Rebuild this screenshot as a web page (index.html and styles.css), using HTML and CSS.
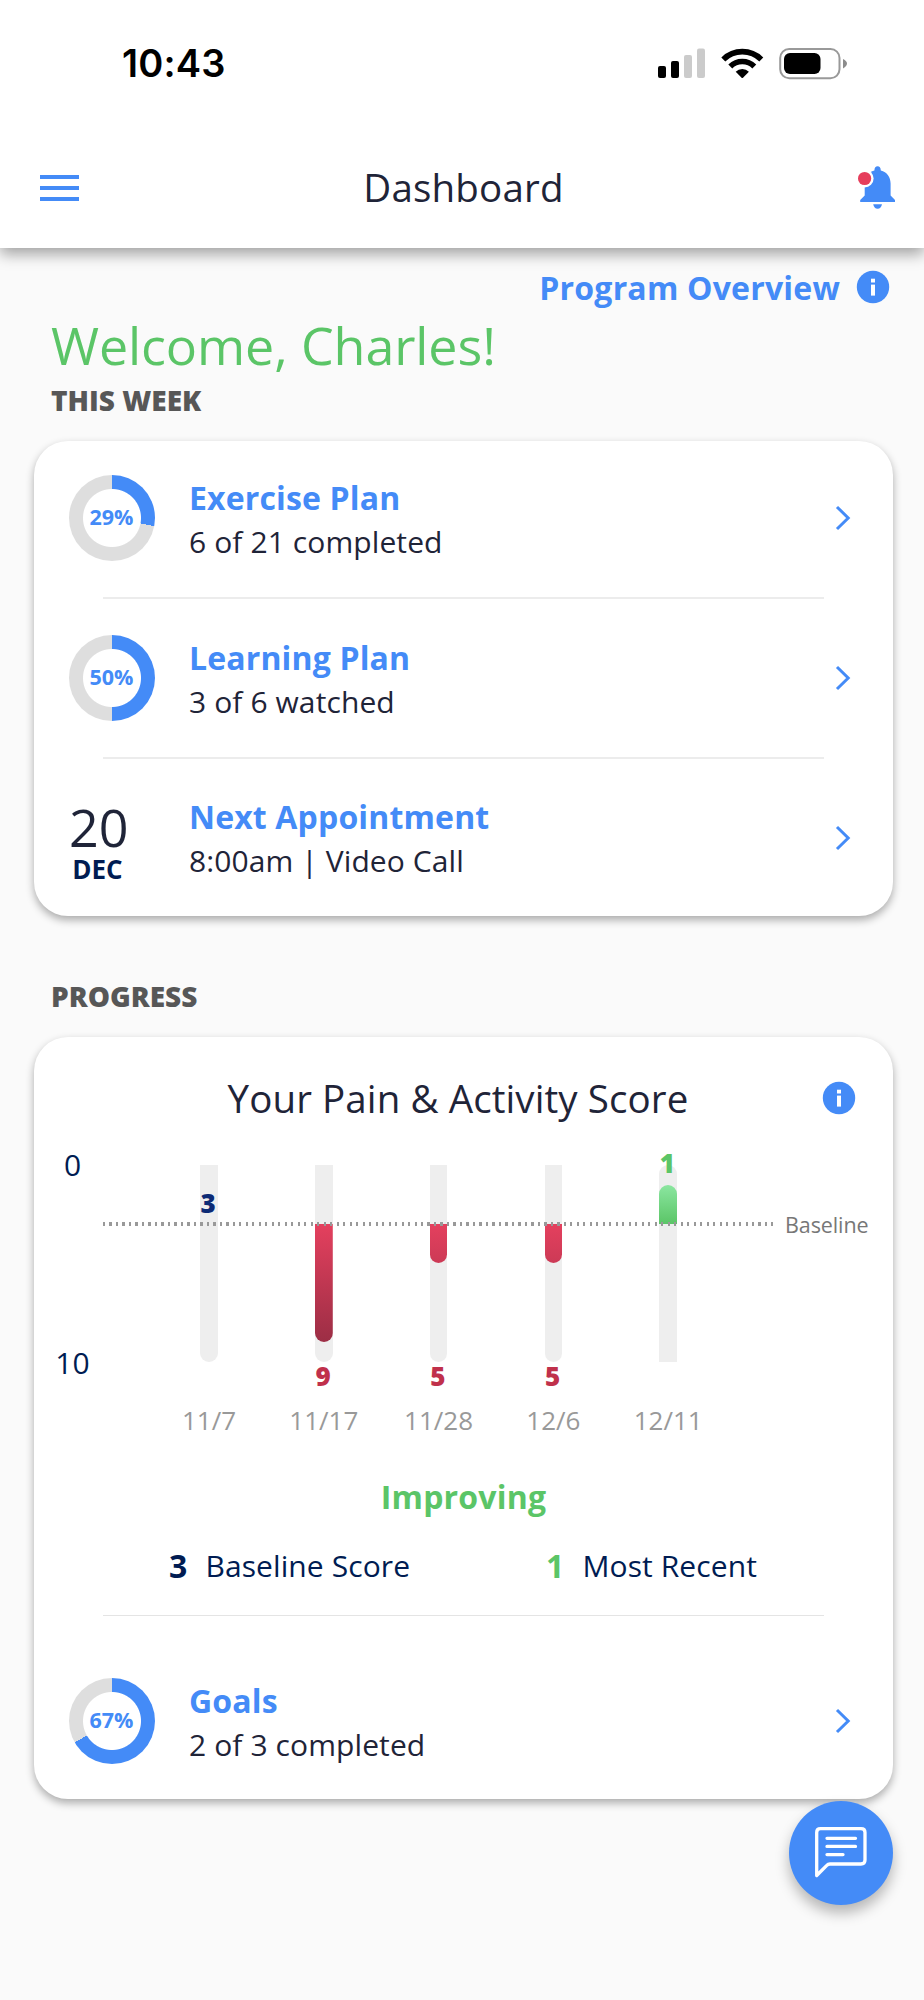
FILE: index.html
```html
<!DOCTYPE html>
<html lang="en">
<head>
    <meta charset="UTF-8">
    <meta name="viewport" content="width=device-width, initial-scale=1.0">
    <title>Dashboard</title>
    <link rel="stylesheet" href="styles.css">
</head>
<body>
    <header class="header">
        <div class="status-bar">
            <span class="time">10:43</span>
            <svg class="status-icons" width="190" height="34" viewBox="0 0 190 34">
                <!-- Signal -->
                <rect x="0" y="20" width="8" height="12" rx="2"/>
                <rect x="13" y="15" width="8" height="17" rx="2"/>
                <rect x="26" y="9" width="8" height="23" rx="2" fill="#cbcbcb"/>
                <rect x="39" y="2.500" width="8" height="29.500" rx="2" fill="#cbcbcb"/>
                <!-- Wifi -->
                <path d="M65.300 13.400A27 27 0 0 1 103.300 13.400" fill="none" stroke="#000" stroke-width="5.600"/>
                <path d="M72.300 20.400A17.100 17.100 0 0 1 96.300 20.400" fill="none" stroke="#000" stroke-width="5.600"/>
                <path d="M77.700 25.800A9.300 9.300 0 0 1 90.900 25.800L85 31.700Q84.300 32.300 83.600 31.700Z"/>
                <!-- Battery -->
                <rect x="122.200" y="3" width="59.300" height="29.300" rx="9" fill="none" stroke="#999" stroke-width="2"/>
                <rect x="126" y="7" width="36.500" height="21" rx="6"/>
                <path d="M185 13Q189 15 189 17.500Q189 20 185 22.500Z" fill="#8c8c8c"/>
            </svg>
        </div>
        <div class="nav-bar">
            <div class="menu">
                <span></span>
                <span></span>
                <span></span>
            </div>
            <h1>Dashboard</h1>
            <svg class="bell" width="40" height="46" viewBox="0 0 40 46">
                <path fill="#448bf7" d="M21.600 2.200C23.500 2.200 24.700 3.500 24.800 6.500C31 8 34.600 13 34.600 19.500V31.500L39 36V38H4.200V36L8.700 31.500V19.500C8.700 13 12 8 18.400 6.500C18.500 3.500 19.700 2.200 21.600 2.200Z"/>
                <path fill="#448bf7" d="M17.200 40.300H26C25.500 43 24 44.800 21.600 44.800S17.700 43 17.200 40.300Z"/>
                <circle cx="8.600" cy="14.500" r="9" fill="#fff"/>
                <circle cx="8.600" cy="14.500" r="6.600" fill="#e63e5c"/>
            </svg>
        </div>
    </header>

    <main>
        <div class="overview">
            <span>Program Overview</span>
            <svg class="info" width="34" height="34" viewBox="0 0 34 34">
                <circle cx="17" cy="17" r="16.200"/>
                <rect x="15" y="8.700" width="4" height="3.800"/>
                <rect x="15" y="14.600" width="4" height="11"/>
            </svg>
        </div>
        <h2 class="welcome">Welcome, Charles!</h2>
        <h3 class="section-title">THIS WEEK</h3>

        <div class="card">
            <div class="row first">
                <div class="left">
                    <div class="ring" style="--value: 28"><span>29%</span></div>
                </div>
                <div class="text">
                    <div class="title">Exercise Plan</div>
                    <div class="sub">6 of 21 completed</div>
                </div>
                <svg class="chevron" width="16" height="28" viewBox="0 0 16 28"><path d="M2 3L13.200 14L2 25"/></svg>
            </div>
            <hr>
            <div class="row">
                <div class="left">
                    <div class="ring" style="--value: 50"><span>50%</span></div>
                </div>
                <div class="text">
                    <div class="title">Learning Plan</div>
                    <div class="sub">3 of 6 watched</div>
                </div>
                <svg class="chevron" width="16" height="28" viewBox="0 0 16 28"><path d="M2 3L13.200 14L2 25"/></svg>
            </div>
            <hr>
            <div class="row last">
                <div class="left">
                    <div class="date">
                        <div class="day">20</div>
                        <div class="month">DEC</div>
                    </div>
                </div>
                <div class="text">
                    <div class="title">Next Appointment</div>
                    <div class="sub">8:00am | Video Call</div>
                </div>
                <svg class="chevron" width="16" height="28" viewBox="0 0 16 28"><path d="M2 3L13.200 14L2 25"/></svg>
            </div>
        </div>

        <h3 class="section-title progress">PROGRESS</h3>

        <div class="card">
            <div class="chart-header">
                <h4>Your Pain &amp; Activity Score</h4>
                <svg class="info" width="34" height="34" viewBox="0 0 34 34">
                    <circle cx="17" cy="17" r="16.200"/>
                    <rect x="15" y="8.700" width="4" height="3.800"/>
                    <rect x="15" y="14.600" width="4" height="11"/>
                </svg>
            </div>

            <div class="chart">
                <div class="axis">
                    <span>0</span>
                    <span>10</span>
                </div>
                <div class="bars">
                    <div class="col">
                        <div class="bar">
                            <span class="value same">3</span>
                        </div>
                        <span class="label">11/7</span>
                    </div>
                    <div class="col">
                        <div class="bar">
                            <div class="fill worse" style="height: 60%"></div>
                            <span class="value worse">9</span>
                        </div>
                        <span class="label">11/17</span>
                    </div>
                    <div class="col">
                        <div class="bar">
                            <div class="fill worse" style="height: 20%"></div>
                            <span class="value worse">5</span>
                        </div>
                        <span class="label">11/28</span>
                    </div>
                    <div class="col">
                        <div class="bar">
                            <div class="fill worse" style="height: 20%"></div>
                            <span class="value worse">5</span>
                        </div>
                        <span class="label">12/6</span>
                    </div>
                    <div class="col">
                        <div class="bar up">
                            <div class="fill better" style="height: 20%"></div>
                            <span class="value better">1</span>
                        </div>
                        <span class="label">12/11</span>
                    </div>
                </div>
                <!-- Dotted line drawn over the bars -->
                <div class="baseline">
                    <div class="dots"></div>
                    <span>Baseline</span>
                </div>
            </div>

            <div class="result">Improving</div>
            <div class="scores">
                <div class="score"><b>3</b><span>Baseline Score</span></div>
                <div class="score recent"><b>1</b><span>Most Recent</span></div>
            </div>
            <hr class="thin">
            <div class="row goals">
                <div class="left">
                    <div class="ring" style="--value: 66.700"><span>67%</span></div>
                </div>
                <div class="text">
                    <div class="title">Goals</div>
                    <div class="sub">2 of 3 completed</div>
                </div>
                <svg class="chevron" width="16" height="28" viewBox="0 0 16 28"><path d="M2 3L13.200 14L2 25"/></svg>
            </div>
        </div>
    </main>

    <div class="chat">
        <svg width="56" height="56" viewBox="0 0 56 56" fill="none" stroke="#fff" stroke-width="3.300" stroke-linecap="round" stroke-linejoin="round">
            <path d="M3.700 50.500V7.500Q3.700 3.700 7.500 3.700H48Q52 3.700 52 7.500V35Q52 39 48 39H17Q15 39 13.800 40.300Z"/>
            <path d="M14 13.300H42.500M14 21.400H42.500M14 29.600H30"/>
        </svg>
    </div>
</body>
</html>
```
FILE: styles.css
```css
body {
    margin: 0;
    height: 2000px;
    background-color: #fafafa;
    font-family: "Open Sans", "Noto Sans", sans-serif;
    color: #1f2438;
    overflow: hidden;
}

h1, h2, h3, h4 {
    margin: 0;
    font-weight: 400;
}

.header {
    height: 248px;
    background-color: #fff;
    box-shadow: 0 6px 14px rgba(0,0,0,0.36);
}

.status-bar {
    display: flex;
    justify-content: space-between;
    align-items: center;
    height: 126px;
    padding: 0 76px 0 122px;
}

.time {
    font-family: Inter, sans-serif;
    font-size: 38px;
    font-weight: 600;
    letter-spacing: 0.2px;
    color: #000;
}

.nav-bar {
    display: flex;
    justify-content: space-between;
    align-items: center;
    height: 122px;
    padding: 0 28px 0 40px;
}

.menu {
    width: 39px;
    display: flex;
    flex-direction: column;
    gap: 7px;
    margin-top: 2px;
}

.menu span {
    height: 4px;
    background-color: #448bf7;
}

.nav-bar h1 {
    margin-right: 8px;
    font-size: 38.5px;
    letter-spacing: 0.2px;
}

/* Info icon */
.info {
    fill: #448bf7;
}

.info rect {
    fill: #fff;
}

.overview {
    display: flex;
    justify-content: flex-end;
    align-items: center;
    gap: 16px;
    height: 44px;
    padding: 17px 34px 1px 0;
    font-size: 32px;
    font-weight: 700;
    letter-spacing: 0.2px;
    color: #448bf7;
}

.welcome {
    margin-left: 51px;
    font-size: 52px;
    line-height: 70px;
    letter-spacing: -0.1px;
    color: #5bc567;
}

.section-title {
    margin-left: 51px;
    font-size: 28px;
    font-weight: 800;
    line-height: 40px;
    color: #575757;
}

.section-title.progress {
    margin-top: 60px;
}

.card {
    margin: 21px 31px 0 34px;
    background-color: #fff;
    border-radius: 34px;
    box-shadow: 0 4px 9px rgba(0,0,0,0.32);
}

.card hr {
    height: 2px;
    margin: 0 69px;
    border: none;
    background-color: #ececec;
}

.card hr.thin {
    height: 1px;
    margin-top: 27px;
    background-color: #e4e4e4;
}

.row {
    display: flex;
    align-items: center;
    box-sizing: border-box;
    height: 158px;
    padding: 0 42px 0 35px;
}

.row.first {
    height: 156px;
    padding-bottom: 2px;
}

.row.last {
    height: 157px;
}

.row.goals {
    height: 183px;
    padding-top: 27px;
}

.left {
    width: 120px;
}

.text {
    flex: 1;
    padding-top: 3px;
    line-height: 44px;
}

.title {
    font-size: 32px;
    font-weight: 700;
    letter-spacing: 0.15px;
    color: #448bf7;
}

.sub {
    font-size: 30px;
    letter-spacing: 0.1px;
}

/* Progress ring */
.ring {
    display: flex;
    justify-content: center;
    align-items: center;
    width: 86px;
    height: 86px;
    border-radius: 50%;
    background: radial-gradient(circle, #fff 28.5px, transparent 29.5px),
        conic-gradient(#448bf7 calc(var(--value) * 1%), #dedede 0);
    font-size: 21.5px;
    font-weight: 700;
    color: #448bf7;
}

.ring span {
    margin: -3px 1px 0 0;
}

.date {
    width: 57px;
    margin-top: 9px;
    text-align: center;
}

.day {
    font-size: 52px;
    line-height: 54px;
}

.month {
    font-size: 26px;
    font-weight: 700;
    line-height: 30px;
    color: #001c52;
}

.chevron {
    fill: none;
    stroke: #448bf7;
    stroke-width: 3px;
}

.chart-header {
    display: flex;
    align-items: center;
    height: 62px;
    padding: 30px 37px 0 60px;
}

.chart-header h4 {
    flex: 1;
    text-align: center;
    font-size: 38.5px;
    letter-spacing: 0.1px;
}

.chart {
    position: relative;
    display: flex;
    margin-top: 36px;
    height: 273px;
}

.axis {
    display: flex;
    flex-direction: column;
    justify-content: space-between;
    width: 77px;
    height: 242px;
    margin-top: -22px;
    text-align: center;
    font-size: 30px;
    line-height: 44px;
    color: #001c52;
}

.bars {
    display: grid;
    grid-template-columns: repeat(5, 114.8px);
    margin-left: 40.6px;
}

.col {
    display: flex;
    flex-direction: column;
    align-items: center;
}

.bar {
    position: relative;
    box-sizing: border-box;
    display: grid;
    grid-template-rows: 197px;
    align-items: start;
    width: 17.5px;
    height: 197px;
    padding-top: 59px;
    border-radius: 0 0 9px 9px;
    background-color: #eee;
}

.bar.up {
    padding-top: 20px;
    border-radius: 9px 9px 0 0;
}

/* Heights are a share of the full 0-10 scale */
.fill.worse {
    border-radius: 0 0 9px 9px;
    background: linear-gradient(#e4405e, #9c2e45) top / 100% 118px no-repeat;
}

.fill.better {
    border-radius: 9px 9px 0 0;
    background: linear-gradient(#8be6a0, #5bc567);
}

.value {
    position: absolute;
    left: -11px;
    width: 38px;
    text-align: center;
    font-size: 26px;
    font-weight: 800;
    line-height: 30px;
}

.value.same {
    top: 23px;
    color: #0c2a75;
}

.value.worse {
    top: 196px;
    color: #c0304b;
}

.value.better {
    top: -17px;
    color: #5bc567;
}

.label {
    margin-top: 40px;
    font-size: 26px;
    line-height: 36px;
    color: #999;
}

.baseline {
    position: absolute;
    left: 69px;
    top: 42px;
    display: flex;
    align-items: center;
    gap: 12px;
    height: 34px;
    font-size: 21.5px;
    letter-spacing: -0.1px;
    color: #777;
}

.dots {
    width: 670px;
    height: 4px;
    background: repeating-linear-gradient(to right, #999 0, #999 2.2px, transparent 2.2px, transparent 6.49px);
}

.result {
    margin-top: 37px;
    text-align: center;
    font-size: 32px;
    font-weight: 700;
    letter-spacing: 0.2px;
    line-height: 44px;
    color: #5bc567;
}

.scores {
    display: flex;
    margin-top: 25px;
    padding-left: 135px;
    font-size: 30px;
    letter-spacing: 0.1px;
    line-height: 44px;
    color: #001c52;
}

.score {
    display: flex;
    gap: 18px;
    width: 377px;
}

.score b {
    font-size: 32px;
}

.recent {
    width: auto;
}

.recent b {
    color: #5bc567;
}

/* Floating chat button */
.chat {
    position: fixed;
    right: 31px;
    bottom: 95px;
    display: flex;
    justify-content: center;
    align-items: center;
    width: 104px;
    height: 104px;
    border-radius: 50%;
    background-color: #448bf7;
    box-shadow: 0 8px 14px rgba(0,0,0,0.28);
}
```
